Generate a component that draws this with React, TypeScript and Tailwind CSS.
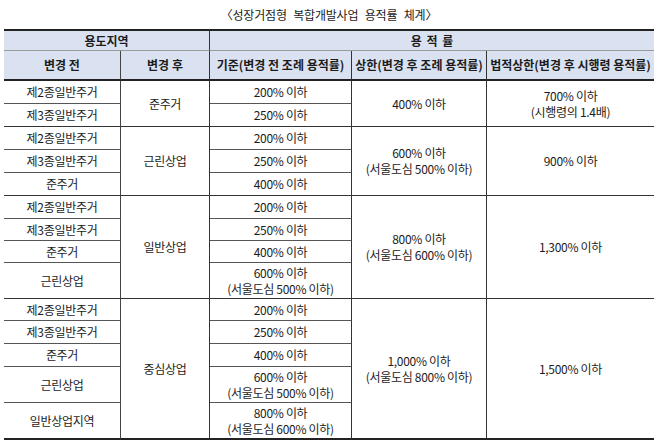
const FONT = { fontFamily: '"Noto Sans CJK KR", "Noto Sans", sans-serif' };

type Row = { before: string[]; base: string[]; h: string };
type Group = { after: string; upper: string[]; legal: string[]; rows: Row[] };

const groups: Group[] = [
  {
    after: "준주거",
    upper: ["400% 이하"],
    legal: ["700% 이하", "(시행령의 1.4배)"],
    rows: [
      { before: ["제2종일반주거"], base: ["200% 이하"], h: "h-[23px]" },
      { before: ["제3종일반주거"], base: ["250% 이하"], h: "h-[23px]" },
    ],
  },
  {
    after: "근린상업",
    upper: ["600% 이하", "(서울도심 500% 이하)"],
    legal: ["900% 이하"],
    rows: [
      { before: ["제2종일반주거"], base: ["200% 이하"], h: "h-[23px]" },
      { before: ["제3종일반주거"], base: ["250% 이하"], h: "h-[23px]" },
      { before: ["준주거"], base: ["400% 이하"], h: "h-[23px]" },
    ],
  },
  {
    after: "일반상업",
    upper: ["800% 이하", "(서울도심 600% 이하)"],
    legal: ["1,300% 이하"],
    rows: [
      { before: ["제2종일반주거"], base: ["200% 이하"], h: "h-[23px]" },
      { before: ["제3종일반주거"], base: ["250% 이하"], h: "h-[22px]" },
      { before: ["준주거"], base: ["400% 이하"], h: "h-[22px]" },
      { before: ["근린상업"], base: ["600% 이하", "(서울도심 500% 이하)"], h: "h-[36px]" },
    ],
  },
  {
    after: "중심상업",
    upper: ["1,000% 이하", "(서울도심 800% 이하)"],
    legal: ["1,500% 이하"],
    rows: [
      { before: ["제2종일반주거"], base: ["200% 이하"], h: "h-[22px]" },
      { before: ["제3종일반주거"], base: ["250% 이하"], h: "h-[23px]" },
      { before: ["준주거"], base: ["400% 이하"], h: "h-[23px]" },
      { before: ["근린상업"], base: ["600% 이하", "(서울도심 500% 이하)"], h: "h-[36px]" },
      { before: ["일반상업지역"], base: ["800% 이하", "(서울도심 600% 이하)"], h: "h-[37px]" },
    ],
  },
];

function Lines({ lines }: { lines: string[] }) {
  return (
    <>
      {lines.map((l) => (
        <div key={l}>{l}</div>
      ))}
    </>
  );
}

export default function App() {
  return (
    <div className="w-[658px] h-[444px] bg-white text-[#1c1c1c] px-[4px]" style={FONT}>
      {/* 제목 */}
      <div className="h-[29px] flex items-center justify-center text-[12px] tracking-[-0.2px] [word-spacing:4px]">
        〈성장거점형 복합개발사업 용적률 체계〉
      </div>

      <table className="w-[650px] border-separate border-spacing-0 table-fixed text-[12px] leading-[16px] text-center tracking-[-0.3px]">
        <colgroup>
          <col className="w-[117px]" />
          <col className="w-[89px]" />
          <col className="w-[142px]" />
          <col className="w-[135px]" />
          <col className="w-[167px]" />
        </colgroup>
        <thead className="bg-[#dae2f2] font-bold">
          <tr>
            <th colSpan={2} className="h-[22px] border-t-2 border-t-[#222] border-b border-b-[#9a9a9a] border-r border-r-[#333] p-0 font-bold tracking-normal">
              용도지역
            </th>
            <th colSpan={3} className="h-[22px] border-t-2 border-t-[#222] border-b border-b-[#9a9a9a] p-0 font-bold tracking-normal [word-spacing:2px]">
              용 적 률
            </th>
          </tr>
          <tr>
            <th className="h-[30px] border-b-2 border-b-[#222] border-r border-r-[#444] p-0 font-bold tracking-normal">변경 전</th>
            <th className="h-[30px] border-b-2 border-b-[#222] border-r border-r-[#333] p-0 font-bold tracking-normal">변경 후</th>
            <th className="h-[30px] border-b-2 border-b-[#222] border-r border-r-[#333] p-0 font-bold tracking-normal">기준(변경 전 조례 용적률)</th>
            <th className="h-[30px] border-b-2 border-b-[#222] border-r border-r-[#333] p-0 font-bold tracking-normal">상한(변경 후 조례 용적률)</th>
            <th className="h-[30px] border-b-2 border-b-[#222] p-0 font-bold tracking-normal">법적상한(변경 후 시행령 용적률)</th>
          </tr>
        </thead>
        <tbody>
          {groups.map((g, gi) => {
            const last = gi === groups.length - 1;
            const groupBorder = last ? "border-b-2 border-b-[#222]" : "border-b border-b-[#333]";
            return g.rows.map((r, ri) => {
              const lastRow = ri === g.rows.length - 1;
              const rowBorder = lastRow ? groupBorder : "border-b border-b-[#555]";
              return (
                <tr key={`${gi}-${ri}`}>
                  <td className={`${r.h} p-0 border-r border-r-[#444] ${rowBorder}`}>
                    <Lines lines={r.before} />
                  </td>
                  {ri === 0 && (
                    <td rowSpan={g.rows.length} className={`p-0 border-r border-r-[#333] ${groupBorder}`}>
                      {g.after}
                    </td>
                  )}
                  <td className={`${r.h} p-0 border-r border-r-[#333] ${rowBorder}`}>
                    <Lines lines={r.base} />
                  </td>
                  {ri === 0 && (
                    <td rowSpan={g.rows.length} className={`p-0 border-r border-r-[#333] ${groupBorder}`}>
                      <Lines lines={g.upper} />
                    </td>
                  )}
                  {ri === 0 && (
                    <td rowSpan={g.rows.length} className={`p-0 ${groupBorder}`}>
                      <Lines lines={g.legal} />
                    </td>
                  )}
                </tr>
              );
            });
          })}
        </tbody>
      </table>
    </div>
  );
}
